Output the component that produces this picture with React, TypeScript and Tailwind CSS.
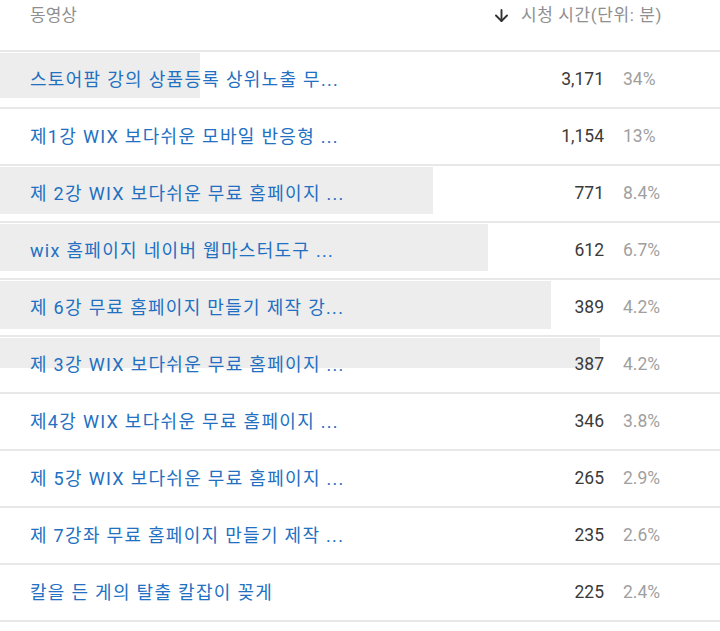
import { ArrowDown } from "lucide-react";

type Row = {
  title: string;
  minutes: string;
  share: string;
  bar?: number; // width of the background bar in px
  barH?: number;
};

const rows: Row[] = [
  { title: "스토어팜 강의 상품등록 상위노출 무...", minutes: "3,171", share: "34%", bar: 200, barH: 45 },
  { title: "제1강 WIX 보다쉬운 모바일 반응형 ...", minutes: "1,154", share: "13%" },
  { title: "제 2강 WIX 보다쉬운 무료 홈페이지 ...", minutes: "771", share: "8.4%", bar: 433, barH: 47 },
  { title: "wix 홈페이지 네이버 웹마스터도구 ...", minutes: "612", share: "6.7%", bar: 488, barH: 47 },
  { title: "제 6강 무료 홈페이지 만들기 제작 강...", minutes: "389", share: "4.2%", bar: 551, barH: 48 },
  { title: "제 3강 WIX 보다쉬운 무료 홈페이지 ...", minutes: "387", share: "4.2%", bar: 600, barH: 30 },
  { title: "제4강 WIX 보다쉬운 무료 홈페이지 ...", minutes: "346", share: "3.8%" },
  { title: "제 5강 WIX 보다쉬운 무료 홈페이지 ...", minutes: "265", share: "2.9%" },
  { title: "제 7강좌 무료 홈페이지 만들기 제작 ...", minutes: "235", share: "2.6%" },
  { title: "칼을 든 게의 탈출 칼잡이 꽂게", minutes: "225", share: "2.4%" },
];

const font = { fontFamily: '"Roboto", "Noto Sans CJK KR", sans-serif' };

export default function App() {
  return (
    <div className="w-[720px] h-[631px] bg-white overflow-hidden" style={font}>
      {/* Header */}
      <div className="h-[52px] flex items-start pt-[3px] border-b-2 border-[#e8e8e8] text-[17px] text-[#8f8f8f]">
        <div className="pl-[30px] flex-1">동영상</div>
        <div className="flex items-center gap-[10px] pr-[58px]">
          <ArrowDown size={19} strokeWidth={2.4} className="text-[#333]" />
          <span className="tracking-[0.6px]">시청 시간(단위: 분)</span>
        </div>
      </div>

      {rows.map((r) => (
        <div
          key={r.title}
          className="relative h-[57px] border-b-2 border-[#e8e8e8] flex items-center"
        >
          {r.bar && (
            <div
              className="absolute left-0 top-px bg-[#ededed]"
              style={{ width: r.bar, height: r.barH }}
            />
          )}
          <div className="relative flex-1 pl-[30px] text-[18px] text-[#2270c2] tracking-[1.3px] whitespace-nowrap">
            {r.title}
          </div>
          <div className="relative w-[80px] text-right text-[17.5px] text-[#3a3a3a]">{r.minutes}</div>
          <div className="relative w-[116px] pl-[19px] text-[17.5px] text-[#a0a0a0]">{r.share}</div>
        </div>
      ))}
    </div>
  );
}
